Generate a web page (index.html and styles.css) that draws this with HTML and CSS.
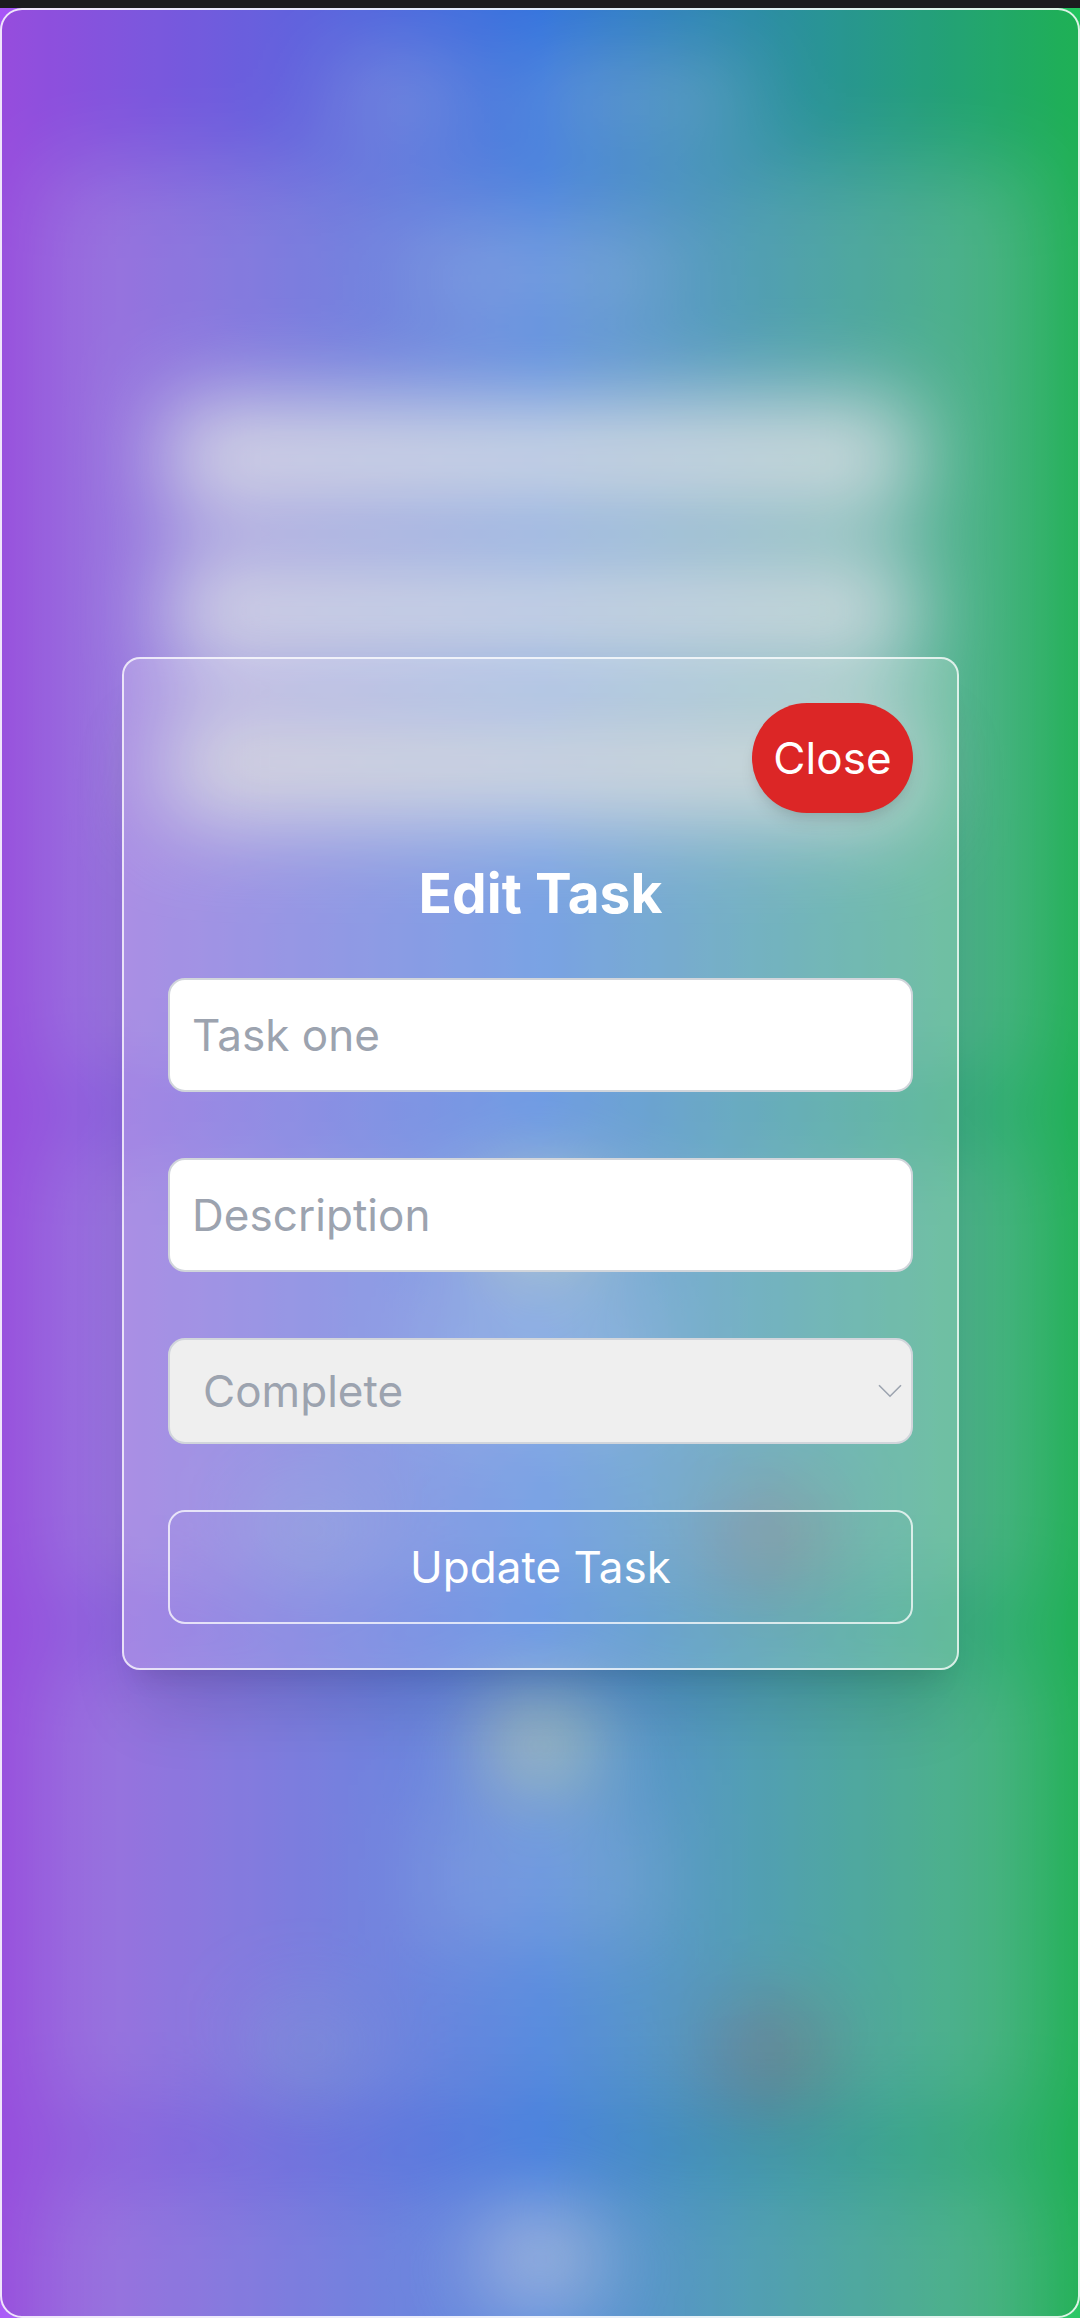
FILE: index.html
```html
<!DOCTYPE html>
<html lang="en">
<head>
<meta charset="utf-8">
<meta name="viewport" content="width=device-width, initial-scale=1">
<title>Edit Task</title>
<link rel="stylesheet" href="styles.css">
</head>
<body>
<div class="statusbar"></div>
<main class="app">
  <div class="page" aria-hidden="true">
    <div class="title"><span class="word short"></span><span class="word long"></span></div>
    <section class="card create">
      <span class="heading"></span>
      <span class="field"></span>
      <span class="field"></span>
      <span class="field select"></span>
    </section>
    <section class="card task">
      <span class="badge"></span>
      <span class="line"></span>
      <div class="actions"><span class="edit"></span><span class="delete"></span></div>
    </section>
    <section class="card task">
      <span class="badge"></span>
      <span class="line"></span>
      <div class="actions"><span class="edit"></span><span class="delete"></span></div>
    </section>
    <section class="card task">
      <span class="badge pale"></span>
    </section>
  </div>
  <div class="overlay">
    <form class="modal">
      <button class="close" type="button">Close</button>
      <h1 class="modal-title">Edit Task</h1>
      <input class="input" type="text" placeholder="Task one">
      <input class="input" type="text" placeholder="Description">
      <div class="input dropdown">
        <span>Complete</span>
        <svg class="chevron" viewBox="0 0 24 14" fill="none" stroke="#9ca3af" stroke-width="1.6"><path d="M1 1.2 12 12.2 23 1.2"/></svg>
      </div>
      <button class="submit" type="button">Update Task</button>
    </form>
  </div>
</main>
</body>
</html>
```

FILE: styles.css
```css
* { box-sizing: border-box; }

body {
  margin: 0;
  height: 2318px;
  overflow: hidden;
  display: flex;
  flex-direction: column;
  font-family: Inter, "Liberation Sans", sans-serif;
  font-size: 44px;
  line-height: 66px;
  letter-spacing: .04px;
}

.statusbar { height: 8px; background: #1c1b1f; }

.app {
  position: relative;
  height: 2310px;
  overflow: hidden;
  background: linear-gradient(to right, #a855f7, #3b82f6, #22c55e);
}

/* Page behind the dialog, out of focus while the dialog is open */
.page {
  display: flex;
  flex-direction: column;
  align-items: center;
  padding: 58px 44px 0;
  filter: blur(44px);
}

.title { display: flex; gap: 50px; height: 62px; margin-bottom: 44px; align-items: center; }
.word { height: 56px; background: rgba(255, 255, 255, .38); }
.short { width: 140px; }
.long { width: 225px; }

.card {
  width: 100%;
  flex: none;
  display: flex;
  flex-direction: column;
  align-items: center;
  background: rgba(255, 255, 255, .21);
  border: 2px solid rgba(255, 255, 255, .75);
  border-radius: 22px;
}

.create { height: 912px; padding-top: 74px; margin-bottom: 55px; }
.heading { width: 250px; height: 60px; margin-bottom: 94px; background: rgba(255, 255, 255, .3); }
.field { width: 748px; height: 110px; margin-bottom: 44px; flex: none; background: rgba(246, 250, 255, .94); border-radius: 16px; }
.select { background: rgba(236, 238, 240, .94); }

.task { height: 462px; padding-top: 38px; margin-bottom: 55px; }
.badge { width: 110px; height: 90px; flex: none; background: rgba(238, 248, 185, .72); border-radius: 22px; }
.pale { background: rgba(240, 236, 242, .68); }
.line { width: 240px; height: 130px; flex: none; margin-top: 28px; background: rgba(255, 255, 255, .18); }
.actions { width: 564px; display: flex; justify-content: space-between; margin-top: 66px; }
.edit, .delete { width: 104px; height: 90px; border-radius: 22px; }
.edit { background: rgba(150, 195, 225, .36); }
.delete { background: rgba(200, 50, 60, .3); }

.overlay {
  position: absolute;
  inset: 0;
  display: flex;
  align-items: center;
  justify-content: center;
  background: rgba(0, 0, 0, .1);
  border: 2px solid rgba(255, 255, 255, .85);
  border-radius: 22px;
}

.modal {
  width: 837px;
  height: 1013px;
  margin-left: 1px;
  padding: 44px;
  display: flex;
  flex-direction: column;
  background: rgba(255, 255, 255, .2);
  border: 2px solid rgba(255, 255, 255, .75);
  border-radius: 18px;
  box-shadow: 0 55px 69px -14px rgba(0, 0, 0, .1), 0 22px 27px -16px rgba(0, 0, 0, .1);
}

button { font: inherit; letter-spacing: inherit; color: #fff; padding: 0; }

.close {
  align-self: flex-end;
  width: 161px;
  height: 110px;
  background: #dc2626;
  border: 0;
  border-radius: 55px;
  box-shadow: 0 11px 16px -3px rgba(0, 0, 0, .1), 0 5px 11px -5px rgba(0, 0, 0, .1);
}

.modal-title {
  margin: 42px 0 47px;
  font-size: 55px;
  line-height: 76px;
  font-weight: 700;
  text-align: center;
  color: #fff;
}

.input {
  width: 100%;
  height: 114px;
  flex: none;
  margin: 0 0 66px;
  padding: 0 22px;
  font: inherit;
  letter-spacing: inherit;
  color: #9ca3af;
  background: #fff;
  border: 2px solid #d1d5db;
  border-radius: 17px;
}
.input::placeholder { color: #9ca3af; opacity: 1; }

.dropdown {
  height: 106px;
  padding: 0 9px 0 33px;
  display: flex;
  align-items: center;
  justify-content: space-between;
  background: #efefef;
}
.chevron { width: 24px; height: 14px; }

.submit {
  height: 114px;
  flex: none;
  background: transparent;
  border: 2px solid rgba(255, 255, 255, .75);
  border-radius: 17px;
}
```
